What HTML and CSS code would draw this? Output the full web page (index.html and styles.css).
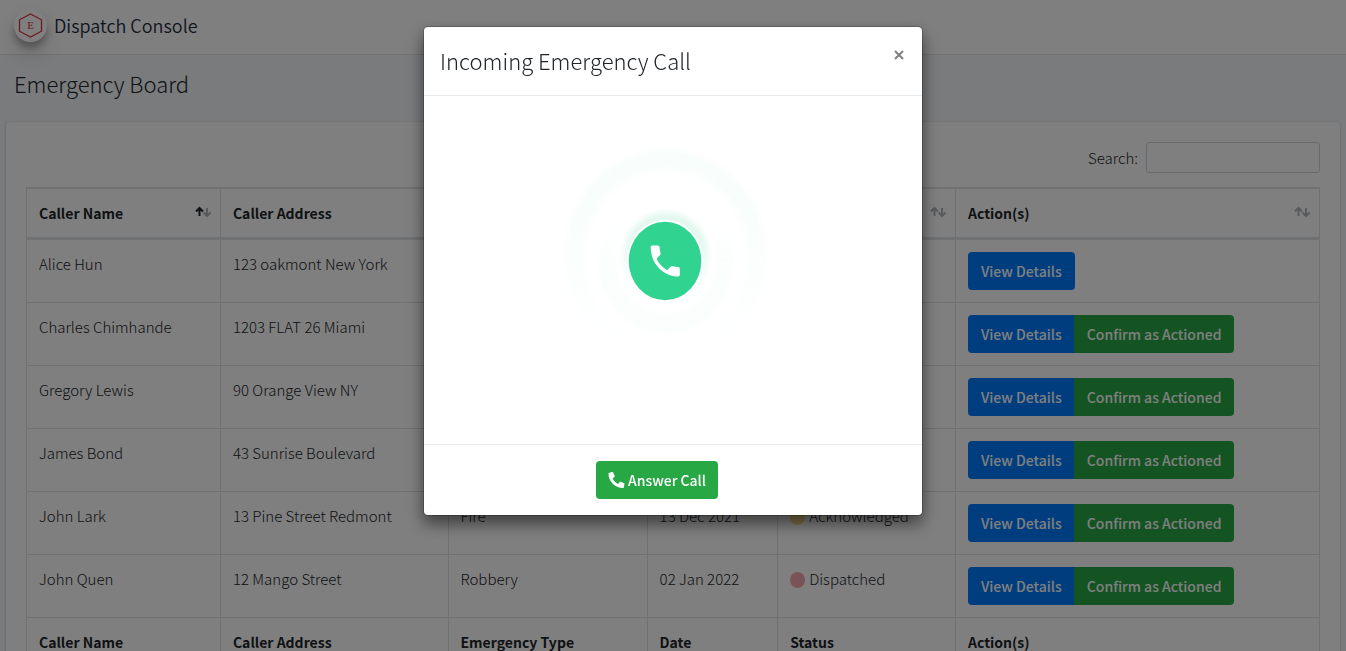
FILE: index.html
```
<!DOCTYPE html>
<html lang="en">
<head>
<meta charset="utf-8">
<title>Dispatch Console</title>
<link rel="stylesheet" href="styles.css">
</head>
<body>
<svg class="defs" aria-hidden="true">
  <symbol id="sort" viewBox="0 0 16 12">
    <path class="up" d="M4.500 10V2M1 5.500L4.500 2L8 5.500"/>
    <path class="down" d="M12 2V10M8.500 6.500L12 10L15.500 6.500"/>
  </symbol>
</svg>
<nav class="navbar">
  <a class="brand" href="#">
    <svg class="brand-logo" viewBox="0 0 33 33" aria-hidden="true">
      <circle cx="16.500" cy="16.500" r="16.500" fill="#fff"/>
      <path d="M16.500 5L27.500 10.800V22.200L16.500 28L5.500 22.200V10.800Z" fill="none" stroke="#e0303e" stroke-width="1.300"/>
      <text x="16.500" y="20" text-anchor="middle" class="logo-letter">E</text>
    </svg>
    <span>Dispatch Console</span>
  </a>
</nav>
<main>
  <h1 class="page-title">Emergency Board</h1>
  <section class="card">
    <div class="search">
      <label for="search">Search:</label>
      <input id="search" type="search">
    </div>
    <table class="calls">
      <colgroup><col class="c-name"><col class="c-address"><col class="c-type"><col class="c-date"><col class="c-status"><col class="c-actions"></colgroup>
      <thead>
        <tr>
          <th><div class="head">Caller Name<svg class="sort asc"><use href="#sort"/></svg></div></th>
          <th><div class="head">Caller Address<svg class="sort"><use href="#sort"/></svg></div></th>
          <th><div class="head">Emergency Type<svg class="sort"><use href="#sort"/></svg></div></th>
          <th><div class="head">Date<svg class="sort"><use href="#sort"/></svg></div></th>
          <th><div class="head">Status<svg class="sort"><use href="#sort"/></svg></div></th>
          <th><div class="head">Action(s)<svg class="sort"><use href="#sort"/></svg></div></th>
        </tr>
      </thead>
      <tbody>
        <tr><td>Alice Hun</td><td>123 oakmont New York</td><td></td><td></td><td></td><td><div class="group"><button class="btn blue">View Details</button></div></td></tr>
        <tr><td>Charles Chimhande</td><td>1203 FLAT 26 Miami</td><td></td><td></td><td></td><td><div class="group"><button class="btn blue">View Details</button><button class="btn green">Confirm as Actioned</button></div></td></tr>
        <tr><td>Gregory Lewis</td><td>90 Orange View NY</td><td></td><td></td><td></td><td><div class="group"><button class="btn blue">View Details</button><button class="btn green">Confirm as Actioned</button></div></td></tr>
        <tr><td>James Bond</td><td>43 Sunrise Boulevard</td><td></td><td></td><td></td><td><div class="group"><button class="btn blue">View Details</button><button class="btn green">Confirm as Actioned</button></div></td></tr>
        <tr><td>John Lark</td><td>13 Pine Street Redmont</td><td>Fire</td><td>13 Dec 2021</td><td><span class="status"><i class="dot yellow"></i>Acknowledged</span></td><td><div class="group"><button class="btn blue">View Details</button><button class="btn green">Confirm as Actioned</button></div></td></tr>
        <tr><td>John Quen</td><td>12 Mango Street</td><td>Robbery</td><td>02 Jan 2022</td><td><span class="status"><i class="dot red"></i>Dispatched</span></td><td><div class="group"><button class="btn blue">View Details</button><button class="btn green">Confirm as Actioned</button></div></td></tr>
      </tbody>
      <tfoot>
        <tr><th>Caller Name</th><th>Caller Address</th><th>Emergency Type</th><th>Date</th><th>Status</th><th>Action(s)</th></tr>
      </tfoot>
    </table>
  </section>
</main>
<div class="backdrop">
  <div class="modal" role="dialog" aria-modal="true" aria-labelledby="modal-title">
    <header class="modal-header">
      <h2 id="modal-title">Incoming Emergency Call</h2>
      <button class="close" aria-label="Close"><svg viewBox="0 0 10 10"><path d="M1 1L9 9M9 1L1 9"/></svg></button>
    </header>
    <div class="modal-body">
      <svg class="ringing" viewBox="0 0 466 316" role="img" aria-label="Ringing phone">
        <defs>
          <radialGradient id="outer"><stop offset=".74" stop-color="#e6f9f2" stop-opacity="0"/><stop offset=".84" stop-color="#e6f9f2" stop-opacity=".3"/><stop offset=".93" stop-color="#e6f9f2" stop-opacity=".3"/><stop offset="1" stop-color="#e6f9f2" stop-opacity="0"/></radialGradient>
          <radialGradient id="middle"><stop offset=".65" stop-color="#e6f9f2" stop-opacity="0"/><stop offset=".78" stop-color="#e6f9f2" stop-opacity=".2"/><stop offset=".92" stop-color="#e6f9f2" stop-opacity=".2"/><stop offset="1" stop-color="#e6f9f2" stop-opacity="0"/></radialGradient>
          <radialGradient id="inner"><stop offset=".84" stop-color="#e4f8f0"/><stop offset="1" stop-color="#e4f8f0" stop-opacity="0"/></radialGradient>
          <linearGradient id="fade" x2="0" y2="1"><stop offset=".3" stop-color="#fff"/><stop offset=".9" stop-color="#000"/></linearGradient>
          <linearGradient id="middle-fade" x2="0" y2="1"><stop offset=".2" stop-color="#000"/><stop offset=".6" stop-color="#fff"/></linearGradient>
          <mask id="top-fade" maskContentUnits="objectBoundingBox"><rect width="1" height="1" fill="url(#fade)"/></mask>
          <mask id="bottom-fade" maskContentUnits="objectBoundingBox"><rect width="1" height="1" fill="url(#middle-fade)"/></mask>
        </defs>
        <ellipse cx="226" cy="144" rx="104" ry="110" fill="url(#outer)" mask="url(#top-fade)"/>
        <ellipse cx="226" cy="149" rx="70" ry="75" fill="url(#middle)" mask="url(#bottom-fade)"/>
        <ellipse cx="226" cy="146" rx="47" ry="50" fill="url(#inner)" mask="url(#top-fade)"/>
        <ellipse cx="225" cy="149" rx="38" ry="41" fill="#fff"/>
        <ellipse cx="225" cy="149" rx="36.300" ry="39.300" fill="#30d490"/>
        <path transform="translate(205.800 128.200) scale(1.620 1.730)" d="M6.620 10.790c1.440 2.830 3.760 5.140 6.590 6.590l2.200-2.200c.27-.27.67-.36 1.020-.24 1.120.37 2.330.57 3.570.57.550 0 1 .45 1 1V20c0 .55-.45 1-1 1-9.390 0-17-7.610-17-17 0-.55.45-1 1-1h3.500c.550 0 1 .45 1 1 0 1.250.2 2.450.57 3.570.11.350.03.740-.25 1.020l-2.200 2.200z" fill="#fff"/>
      </svg>
    </div>
    <footer class="modal-footer">
      <button class="btn green"><svg class="phone" viewBox="0 0 512 512" aria-hidden="true"><path fill="currentColor" d="M493.400 24.600l-104-24c-11.300-2.600-22.900 3.300-27.500 13.900l-48 112c-4.200 9.800-1.400 21.300 6.900 28l60.600 49.600c-36 76.700-98.900 140.500-177.200 177.200l-49.600-60.600c-6.800-8.300-18.200-11.100-28-6.900l-112 48C3.900 366.500-2 378.100.600 389.400l24 104C27.100 504.200 36.700 512 48 512c256.100 0 464-207.500 464-464 0-11.200-7.700-20.900-18.600-23.400z" transform="matrix(-1 0 0 1 512 0)"/></svg>Answer Call</button>
    </footer>
  </div>
</div>
</body>
</html>
```
FILE: styles.css
```
*, *::before, *::after { box-sizing: border-box; }
html { height: 100%; overflow: hidden; }
body {
  margin: 0;
  height: 100%;
  overflow: hidden;
  background: #f4f6f9;
  color: #212529;
  font: 300 15px/24px "Noto Sans CJK SC", "Noto Sans", sans-serif;
}
h1, h2 { margin: 0; font-weight: 300; }
button, input { font: inherit; }
.defs { display: none; }

.navbar {
  display: flex;
  align-items: center;
  height: 55px;
  padding: 0 14px 4px;
  background: #fff;
  border-bottom: 1px solid #dee2e6;
}
.brand {
  display: flex;
  align-items: center;
  gap: 7px;
  color: #1f2d3d;
  font-size: 18px;
  font-weight: 350;
  text-decoration: none;
}
.brand-logo {
  width: 33px;
  height: 33px;
  border-radius: 50%;
  box-shadow: 0 10px 20px rgba(0, 0, 0, .19), 0 6px 6px rgba(0, 0, 0, .23);
}
.logo-letter { font: 11px "Liberation Serif", serif; fill: #e0303e; }

.page-title { padding: 12px 14px 23px; font-size: 22px; line-height: 32px; }
.card {
  margin: 0 6px;
  padding: 20px;
  background: #fff;
  border-radius: 4px;
  box-shadow: 0 0 1px rgba(0, 0, 0, .13), 0 1px 3px rgba(0, 0, 0, .2);
}
.search {
  display: flex;
  justify-content: flex-end;
  align-items: center;
  gap: 8px;
  margin-bottom: 14px;
}
.search input {
  width: 174px;
  height: 31px;
  padding: 4px 8px;
  background: #fff;
  border: 1px solid #ced4da;
  border-radius: 3px;
}

.calls {
  width: 100%;
  table-layout: fixed;
  border-collapse: separate;
  border-spacing: 0;
  border: solid #dee2e6;
  border-width: 1px 0 0 1px;
}
.c-name { width: 15%; }
.c-address { width: 17.6%; }
.c-type { width: 15.4%; }
.c-date { width: 10.1%; }
.c-status { width: 13.75%; }
.calls th, .calls td {
  padding: 12px;
  text-align: left;
  vertical-align: top;
  border: solid #dee2e6;
  border-width: 1px 1px 0 0;
}
.calls thead th { padding: 12px 9px 12px 12px; border-bottom-width: 2px; }
.calls th { font-size: 14px; font-weight: 700; }
.head { display: flex; justify-content: space-between; align-items: center; }
.sort {
  width: 16px;
  height: 12px;
  margin-bottom: 3px;
  fill: none;
  stroke: #b2b4b6;
  stroke-width: 2;
}
.up { stroke: var(--up, #b2b4b6); }
.asc { --up: #212529; }
.status { display: flex; align-items: center; gap: 4px; }
.dot { width: 15px; height: 16px; margin-top: 2px; border-radius: 50%; }
.yellow { background: #ffe08a; }
.red { background: #f5a6ad; }

.btn {
  display: inline-flex;
  align-items: center;
  height: 38px;
  padding: 0 13px;
  border: 0;
  border-radius: 4px;
  color: #fff;
  font-size: 14px;
  font-weight: 500;
}
.blue { background: #007bff; }
.green { background: #28a745; }
.group { display: flex; }
.group .btn + .btn { margin-left: -1px; border-radius: 0 4px 4px 0; }
.group .btn:not(:last-child) { border-radius: 4px 0 0 4px; }

.backdrop {
  position: fixed;
  inset: 0;
  padding: 26px 16px;
  background: rgba(0, 0, 0, .5);
}
.modal {
  max-width: 500px;
  margin: 0 auto;
  background: #fff;
  background-clip: padding-box;
  border: 1px solid rgba(0, 0, 0, .2);
  border-radius: 5px;
  box-shadow: 0 8px 16px rgba(0, 0, 0, .5);
}
.modal-header {
  display: flex;
  justify-content: space-between;
  align-items: flex-start;
  padding: 15px 16px 17px;
  border-bottom: 1px solid #e9ecef;
}
.modal-header h2 { font-size: 22px; line-height: 36px; }
.close {
  display: flex;
  padding: 8px 2px;
  border: 0;
  background: none;
}
.close svg { width: 10px; height: 10px; fill: none; stroke: #7f7f7f; stroke-width: 2; }
.modal-body { padding: 16px; }
.ringing { display: block; width: 100%; }
.modal-footer {
  display: flex;
  justify-content: center;
  padding: 16px 48px 16px 16px;
  border-top: 1px solid #e9ecef;
}
.phone { width: 17px; height: 16px; margin-right: 3px; }
.modal-footer .btn { padding: 0 12px; }
```
